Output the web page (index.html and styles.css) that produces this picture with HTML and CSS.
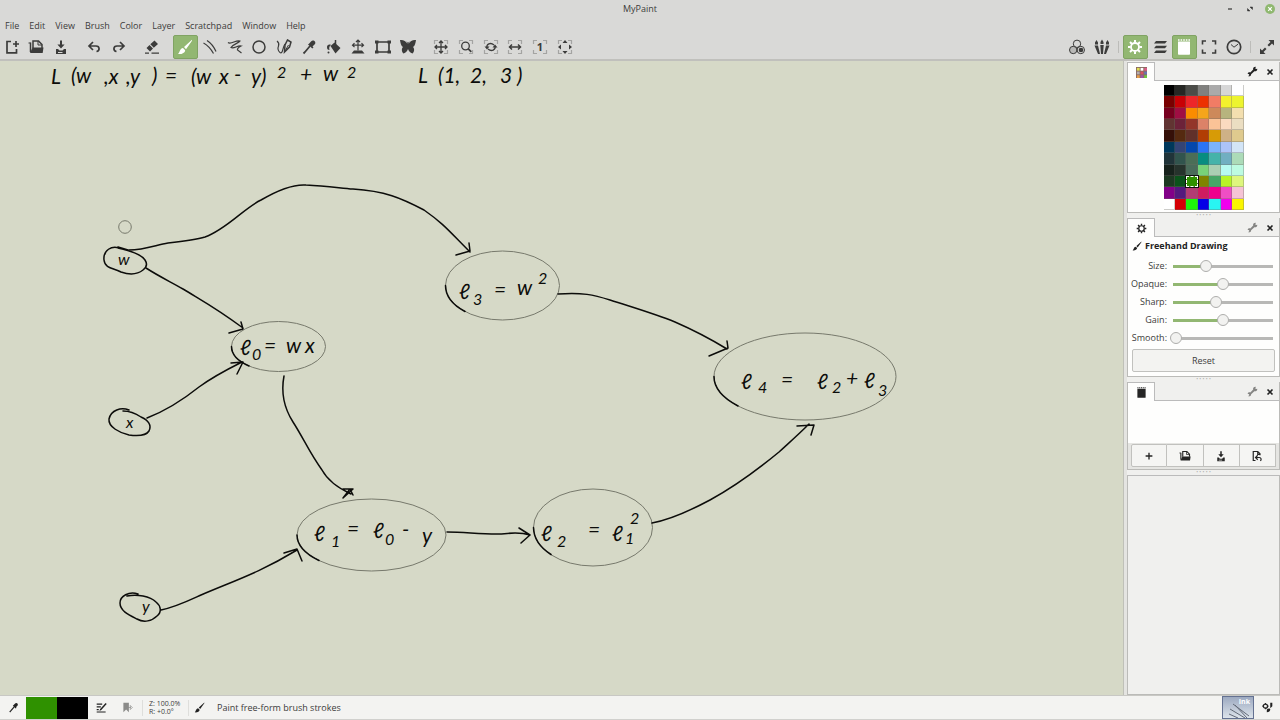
FILE: index.html
```html
<!DOCTYPE html>
<html lang="en">
<head>
<meta charset="utf-8">
<title>MyPaint</title>
<link rel="stylesheet" href="styles.css">
</head>
<body>
<svg class="defs" aria-hidden="true">
  <symbol id="i-new" viewBox="0 0 16 16"><path d="M7 2.500H3v11.300h9.500V10M9 5h6M12 2v6" fill="none" stroke="currentColor" stroke-width="1.700"/></symbol>
  <symbol id="i-open" viewBox="0 0 16 16"><path d="M2.500 13V3.500M5 9V2h5.500L14 5.500V9" fill="none" stroke="currentColor" stroke-width="1.500"/><path d="M10 2v4h4M.5 4h2" fill="none" stroke="currentColor"/><path d="M4.500 8.500h11l-.8 5.500H2z" fill="currentColor"/></symbol>
  <symbol id="i-save" viewBox="0 0 16 16"><path d="M7 1.500h2v4h2.600L8 9.500 4.400 5.500H7zM3 10h2l1.500 1.500h3L11 10h2v5H3z" fill="currentColor"/><path d="M5 13.500h4.500" stroke="#d9d9d7"/></symbol>
  <symbol id="i-undo" viewBox="0 0 16 16"><path d="M7 3 3 7l4 4M3.500 7h6.500c4 0 4 5 .5 5.500" fill="none" stroke="currentColor" stroke-width="1.700"/></symbol>
  <symbol id="i-redo" viewBox="0 0 16 16"><path d="m9 3 4 4-4 4M12.500 7H6c-4 0-4 5-.5 5.500" fill="none" stroke="currentColor" stroke-width="1.700"/></symbol>
  <symbol id="i-eraser" viewBox="0 0 16 16"><path d="m2.500 9 3-3L9 9.500l-3 3zM6.300 5.200 10.500 1.500 14 5 9.800 8.800z" fill="currentColor"/><path d="M1 14.200h4M7.500 14.200H15" stroke="currentColor" stroke-width="1.300"/></symbol>
  <symbol id="i-brush" viewBox="0 0 16 16"><path d="M15 .8 7 8l2 2.200 6-8.400zM6 9 8.200 11.200C8 14 4.500 15.500 1 15c2-1.500 1.500-5.500 5-6" fill="currentColor"/></symbol>
  <symbol id="i-lines" viewBox="0 0 16 16"><path d="M1.500 4C6 6.500 9 10 11.500 14.500M5 1.500c4 2.500 7 6.500 9 11" fill="none" stroke="currentColor" stroke-width="1.200"/></symbol>
  <symbol id="i-zig" viewBox="0 0 16 16"><path d="M1 3.500c3 2.500 8-3 12-1.500-1 2-7 3-9 6.500 3 1.500 6-2 10-1.500-2 1-4 2-3.500 4l4 3" fill="none" stroke="currentColor" stroke-width="1.200"/></symbol>
  <symbol id="i-ellipse" viewBox="0 0 16 16"><circle cx="8" cy="8" r="6" fill="none" stroke="currentColor" stroke-width="1.500"/></symbol>
  <symbol id="i-ink" viewBox="0 0 16 16"><path d="M1 2c4 3 .5 5 1 8s3 5 4 3 1-5 3-8" fill="none" stroke="currentColor" stroke-width="1.200"/><path d="m11.500 1 3.500 2-1.500 5-5 5 .5-7z" fill="none" stroke="currentColor" stroke-width="1.500"/><path d="m8.500 13 4-7" stroke="currentColor"/></symbol>
  <symbol id="i-picker" viewBox="0 0 16 16"><path d="M10 2.500c2-2.500 5.500 0 4 2.500L11.500 7.500l1 1-1.200 1L7 5.500l1.200-1z" fill="currentColor"/><path d="m9 7-5 6-1.500 1.500" fill="none" stroke="currentColor" stroke-width="1.800"/></symbol>
  <symbol id="i-fill" viewBox="0 0 16 16"><path d="m4.500 7 4-3.500L14.500 9l-5 5.500zM1 8c0-2 2-3 4-2-2 1-2 3-1.500 5C1.500 11 1 10 1 8" fill="currentColor"/><path d="M9.500 8V1" stroke="currentColor" stroke-width="1.500"/><circle cx="2.500" cy="13.500" r="1" fill="currentColor"/></symbol>
  <symbol id="i-layer" viewBox="0 0 16 16"><path d="M8 1v10.500M2.500 6.200h11M6 3l2-2 2 2M4.500 4.200l-2 2 2 2M11.500 4.200l2 2-2 2" fill="none" stroke="currentColor" stroke-width="1.200"/><path d="M1.500 14.500h13L12 11.500H4z" fill="currentColor"/></symbol>
  <symbol id="i-frame" viewBox="0 0 16 16"><path d="M2 3h12v10H2z" fill="none" stroke="currentColor" stroke-width="1.700"/><path d="M0 1.500h3.500v3H0zM12.500 1.500H16v3h-3.500zM0 11.500h3.500v3H0zM12.500 11.500H16v3h-3.500z" fill="currentColor"/></symbol>
  <symbol id="i-butterfly" viewBox="0 0 16 16"><path d="M0 1c3-.5 6 1 7.500 4l-1-3 1.500 2 1.500-2-1 3C10 2 13 .5 16 1c-.5 3-1 6-3 7 2 2 1 5.500-.5 6.500C10 14 8.800 12 8 10c-.8 2-2 4-4.500 4.500C2 13.500 1 10 3 8 1 7 .5 4 0 1" fill="currentColor"/></symbol>
  <symbol id="i-corners" viewBox="0 0 16 16"><path d="M1.500 5V1.500H5M11 1.500h3.500V5M14.500 11v3.500H11M5 14.500H1.500V11" fill="none" stroke="#a4a4a2" stroke-width="1.200"/></symbol>
  <symbol id="i-pan" viewBox="0 0 16 16"><path d="M8 2v12M2 8h12M6 4l2-2 2 2M6 12l2 2 2-2M4 6 2 8l2 2M12 6l2 2-2 2" fill="none" stroke="currentColor" stroke-width="1.300"/></symbol>
  <symbol id="i-zoom" viewBox="0 0 16 16"><circle cx="7.500" cy="7" r="3.800" fill="none" stroke="currentColor" stroke-width="1.300"/><path d="m10.300 9.800 3 3" stroke="currentColor" stroke-width="1.700"/></symbol>
  <symbol id="i-rotate" viewBox="0 0 16 16"><path d="M4 9C3 5 7.500 3 11 6M12 7c1 4-3.500 6-7 3" fill="none" stroke="currentColor" stroke-width="1.300"/><path d="M1.500 7.500h5L4 10.500zM9.500 8.500h5L12 5.500z" fill="currentColor"/></symbol>
  <symbol id="i-mirror" viewBox="0 0 16 16"><path d="M2.500 8h11M5 5.500 2.500 8 5 10.500M11 5.500 13.500 8 11 10.500" fill="none" stroke="currentColor" stroke-width="1.500"/></symbol>
  <symbol id="i-fit" viewBox="0 0 16 16"><path d="m8 1 2.500 3h-5zM8 15l-2.500-3h5zM1 8l3-2.500v5zM15 8l-3 2.500v-5z" fill="currentColor"/></symbol>
  <symbol id="i-colors" viewBox="0 0 16 16"><g fill="none" stroke="currentColor"><circle cx="8" cy="4.800" r="3.700"/><circle cx="4.200" cy="11" r="3.700" fill="#b9b9b7"/><circle cx="11.800" cy="11" r="3.700"/></g><circle cx="12" cy="11" r="2.300" fill="currentColor"/></symbol>
  <symbol id="i-brushes" viewBox="0 0 16 16"><path d="M2.500 1 4 3.500v2H1v-2zM8 .5 9.500 3v2h-3V3zM13.500 1 15 3.500v2h-3v-2zM.5 6.500h3.500l2 8.500H4zM6.300 6h3.400L9 15H7zM12 6.500h3.500L12 15h-2z" fill="currentColor"/></symbol>
  <symbol id="i-gear" viewBox="0 0 16 16"><circle cx="8" cy="8" r="4" fill="none" stroke="currentColor" stroke-width="1.800"/><path d="M8 1v2.500M8 12.500V15M1 8h2.500M12.500 8H15M3 3l2 2M11 11l2 2M13 3l-2 2M5 11l-2 2" stroke="currentColor" stroke-width="2"/></symbol>
  <symbol id="i-layers" viewBox="0 0 16 16"><path d="M4 2h11l-2 2.500H2zM4 6.700h11l-2 2.500H2zM4 11.400h11l-2 2.500H2z" fill="currentColor"/></symbol>
  <symbol id="i-pad" viewBox="0 0 16 16"><path d="M2 2.500h12V15q0 .8-.8.800H2.800Q2 15.800 2 15z" fill="currentColor"/><path d="M2 1h12" stroke="currentColor" stroke-width="1.600" stroke-dasharray="1.600 1"/></symbol>
  <symbol id="i-full" viewBox="0 0 16 16"><path d="M1.500 5.500V2H5M11 2h3.500v3.500M14.500 10.500V14H11M5 14H1.500v-3.500" fill="none" stroke="currentColor" stroke-width="1.600"/></symbol>
  <symbol id="i-clock" viewBox="0 0 16 16"><circle cx="8" cy="8" r="6.700" fill="none" stroke="currentColor" stroke-width="1.700"/><path d="m5 5.500 3 2.700 4-3" fill="none" stroke="currentColor"/></symbol>
  <symbol id="i-expand" viewBox="0 0 16 16"><path d="M9.500 1H15v5.500l-2-2-3 3L8.500 6l3-3zM6.500 15H1V9.500l2 2 3-3L7.500 10l-3 3z" fill="currentColor"/></symbol>
  <symbol id="i-wrench" viewBox="0 0 16 16"><path d="M10.500 1.500 13 1l-1 2.500 1.300 1L15 4c0 3-2 4-4.300 3.600L6 12c0 2.500-2 3.500-4.500 2.800L3.500 13l-1-1.500L1 11.700C1 9.500 3 8.800 4.800 9.500L9 5c-.3-1.500 0-2.700 1.500-3.500" fill="currentColor"/></symbol>
  <symbol id="i-x" viewBox="0 0 16 16"><path d="m4 4 8 8M12 4l-8 8" stroke="currentColor" stroke-width="2.600"/></symbol>
  <symbol id="i-plus" viewBox="0 0 16 16"><path d="M8 3.500v9M3.500 8h9" stroke="currentColor" stroke-width="1.800"/></symbol>
  <symbol id="i-revert" viewBox="0 0 16 16"><path d="M6 14H3V2h6l3 3v2M9 2v4h3M9 7l-3 3 3 3M6.500 10H11c3 0 3 3 1.500 4.500" fill="none" stroke="currentColor" stroke-width="1.600"/></symbol>
  <symbol id="i-edit" viewBox="0 0 16 16"><path d="M1 3h8M1 7h6M1 11h3M1 14.500h13" stroke="currentColor" stroke-width="1.700"/><path d="m14 1.500-8 8.500-1 3 2.700-1.200L15.500 3z" fill="currentColor"/></symbol>
  <symbol id="i-bookmark" viewBox="0 0 16 16"><path d="M2 1h8v14l-4-4-4 4z" fill="currentColor"/><path d="M8 8h5M12 5l3 3-3 3z" stroke="currentColor" fill="#f3f3f1"/></symbol>
  <symbol id="i-brushset" viewBox="0 0 16 16"><circle cx="5" cy="6" r="3" fill="none" stroke="currentColor" stroke-width="1.800"/><path d="M5 1.500v2M5 8.500v2M.5 6h2M7.500 6h2" stroke="currentColor" stroke-width="1.500"/><path d="M12 1h3v5l-3 3zM7 11c2-2 5-2 5 0s-2 4-5 4z" fill="currentColor"/></symbol>
</svg>

<header class="titlebar">
  <h1 class="title">MyPaint</h1>
  <div class="window-controls">
    <button aria-label="Minimize"><svg viewBox="0 0 10 10"><path d="M3 5h4" stroke="#333" stroke-width="1.200"/></svg></button>
    <button aria-label="Restore"><svg viewBox="0 0 10 10"><path d="M5 3h2.500v2.500zM2.500 4.500V7H5z" fill="#333" stroke="#333" stroke-width=".5"/></svg></button>
    <button aria-label="Close"><svg viewBox="0 0 10 10"><circle cx="5" cy="5" r="5" fill="#8fb86f"/><path d="m3.200 3.200 3.600 3.600M6.800 3.200 3.200 6.800" stroke="#fff" stroke-width="1.200"/></svg></button>
  </div>
</header>

<nav class="menubar">
  <button>File</button><button>Edit</button><button>View</button><button>Brush</button><button>Color</button><button>Layer</button><button>Scratchpad</button><button>Window</button><button>Help</button>
</nav>

<div class="toolbar" role="toolbar" aria-label="Main tools">
  <div class="group three">
    <button aria-label="New"><svg><use href="#i-new"/></svg></button>
    <button aria-label="Open"><svg><use href="#i-open"/></svg></button>
    <button aria-label="Save"><svg><use href="#i-save"/></svg></button>
  </div>
  <div class="group two">
    <button aria-label="Undo"><svg><use href="#i-undo"/></svg></button>
    <button aria-label="Redo"><svg><use href="#i-redo"/></svg></button>
  </div>
  <div class="group one"><button aria-label="Eraser"><svg><use href="#i-eraser"/></svg></button></div>
  <div class="group ten">
    <button class="active" aria-label="Freehand drawing"><svg><use href="#i-brush"/></svg></button>
    <button aria-label="Lines"><svg><use href="#i-lines"/></svg></button>
    <button aria-label="Connected lines"><svg><use href="#i-zig"/></svg></button>
    <button aria-label="Ellipses"><svg><use href="#i-ellipse"/></svg></button>
    <button aria-label="Inking"><svg><use href="#i-ink"/></svg></button>
    <button aria-label="Pick color"><svg><use href="#i-picker"/></svg></button>
    <button aria-label="Flood fill"><svg><use href="#i-fill"/></svg></button>
    <button aria-label="Move layer"><svg><use href="#i-layer"/></svg></button>
    <button aria-label="Edit frame"><svg><use href="#i-frame"/></svg></button>
    <button aria-label="Symmetry"><svg><use href="#i-butterfly"/></svg></button>
  </div>
  <div class="group six">
    <button aria-label="Pan"><svg><use href="#i-corners"/><use href="#i-pan"/></svg></button>
    <button aria-label="Zoom"><svg><use href="#i-corners"/><use href="#i-zoom"/></svg></button>
    <button aria-label="Rotate"><svg><use href="#i-corners"/><use href="#i-rotate"/></svg></button>
    <button aria-label="Mirror"><svg><use href="#i-corners"/><use href="#i-mirror"/></svg></button>
    <button aria-label="Reset view"><svg viewBox="0 0 16 16"><use href="#i-corners"/><text x="8" y="12" class="one-mark">1</text></svg></button>
    <button aria-label="Fit view"><svg><use href="#i-corners"/><use href="#i-fit"/></svg></button>
  </div>
  <div class="group two end">
    <button aria-label="Colors"><svg><use href="#i-colors"/></svg></button>
    <button aria-label="Brushes"><svg><use href="#i-brushes"/></svg></button>
  </div>
  <span class="sep"></span>
  <div class="group five">
    <button class="active" aria-label="Tool options"><svg><use href="#i-gear"/></svg></button>
    <button aria-label="Layers"><svg><use href="#i-layers"/></svg></button>
    <button class="active" aria-label="Scratchpad"><svg><use href="#i-pad"/></svg></button>
    <button aria-label="Frame"><svg><use href="#i-full"/></svg></button>
    <button aria-label="History"><svg><use href="#i-clock"/></svg></button>
  </div>
  <span class="sep"></span>
  <div class="group one"><button aria-label="Fullscreen"><svg><use href="#i-expand"/></svg></button></div>
</div>

<main class="workspace">
  <section class="canvas" aria-label="Canvas">
    <svg class="drawing" viewBox="0 61 1123 634" preserveAspectRatio="xMinYMin meet">
      <g class="formula">
        <text x="51" y="84">L</text><text x="71" y="83">(w</text><text x="104" y="84">,x</text><text x="126" y="84">,y</text><text x="152" y="83">)</text><text x="165" y="83">=</text><text x="191" y="84">(w</text><text x="219" y="84">x</text><text x="234" y="82">-</text><text x="251" y="84">y)</text><text class="small" x="277" y="78">2</text><text x="300" y="82">+</text><text x="323" y="81">w</text><text class="small" x="347" y="78">2</text>
        <text x="418" y="83">L</text><text x="438" y="83">(1,</text><text x="470" y="83">2,</text><text x="500" y="83">3</text><text x="517" y="83">)</text>
        <text x="118" y="265" class="small">w</text><text x="126" y="428" class="small">x</text><text x="142" y="612" class="small">y</text>
        <text x="240" y="355">ℓ</text><text x="252" y="360" class="small">0</text><text x="264" y="353">=</text><text x="286" y="353">w</text><text x="305" y="353">x</text>
        <text x="459" y="299">ℓ</text><text x="473" y="305" class="small">3</text><text x="494" y="297">=</text><text x="517" y="295">w</text><text x="538" y="284" class="small">2</text>
        <text x="741" y="389">ℓ</text><text x="758" y="393" class="small">4</text><text x="781" y="387">=</text><text x="817" y="389">ℓ</text><text x="832" y="393" class="small">2</text><text x="846" y="386">+</text><text x="864" y="388">ℓ</text><text x="878" y="396" class="small">3</text>
        <text x="314" y="541">ℓ</text><text x="331" y="547" class="small">1</text><text x="347" y="536">=</text><text x="373" y="538">ℓ</text><text x="385" y="545" class="small">0</text><text x="402" y="537">-</text><text x="422" y="543">y</text>
        <text x="541" y="541">ℓ</text><text x="557" y="547" class="small">2</text><text x="588" y="537">=</text><text x="612" y="541">ℓ</text><text x="630" y="524" class="small">2</text><text x="625" y="544" class="small">1</text>
      </g>
      <g class="outline">
        <circle cx="125" cy="227" r="6.300"/>
        <ellipse cx="278.500" cy="346.500" rx="47" ry="25"/>
        <ellipse cx="502.500" cy="285.500" rx="57" ry="34.500"/>
        <ellipse cx="805" cy="376.500" rx="91" ry="43.500"/>
        <ellipse cx="371.500" cy="535" rx="74.500" ry="36"/>
        <ellipse cx="593" cy="527.500" rx="59.500" ry="38.500"/>
      </g>
      <g class="ink">
        <path d="M122 249C111 244 103 251 104 260s10 8 17 12c9 3 17 2 22-2 4-3 4-7 2-10-4-6-15-9-27-12M118 247l10 3"/>
        <path d="M129 410c-8-3-18 0-20 9-1 8 11 14 20 16 8 1 17 1 20-4 3-6-1-11-8-14-6-4-14-6-18-6"/>
        <path d="M138 594c-9-3-18 2-18 9 0 8 9 12 17 16 7 4 15 2 20-3 5-4 4-10-1-14-6-6-19-8-29-6"/>
        <path d="M129 250c16 0 27-5 39-7 18-2 27-3 37-6 22-8 39-29 56-37 17-10 31-16 45-15 21 1 34 3 47 4 32 2 48 9 71 21 20 14 25 21 46 42M456 255l14-4-1-8"/>
        <path d="M146 268c14 9 25 14 37 21 23 14 33 19 60 39M241 322l2 7-14 4"/>
        <path d="M147 418c18-7 32-15 52-31 15-11 29-18 43-25M231 363l12-1-6 12"/>
        <path d="M284 376c-4 21 2 35 9 46 11 17 16 30 29 48 6 11 16 18 29 24M343 489h10l-10 9 7-9 3 6"/>
        <path d="M161 610c15-3 29-10 40-15 35-15 58-22 96-45M284 553l13-4 5 12"/>
        <path d="M447 532c18 0 30 2 50 2 12 0 20-3 33 1M519 528l11 7-9 8"/>
        <path d="M558 294c24-2 36 1 52 6 31 10 45 14 65 22 23 10 34 16 52 27M709 356l19-8-1-7"/>
        <path d="M652 523c22-4 43-15 58-23 22-12 46-29 69-48 12-11 20-18 30-28M797 426l17-1-3 10"/>
        <path class="arc" d="M231.500 346.500A47 25 0 0 0 249 366M445.500 285.500A57 34.500 0 0 0 465 311.500M714 376.500A91 43.500 0 0 0 738 406M297 535A74.500 36 0 0 0 319 560.500M533.500 527.500A59.500 38.500 0 0 0 551 554.500"/>
      </g>
    </svg>
  </section>
  <div class="splitter"></div>
  <aside class="sidebar">
    <section class="panel">
      <div class="tabs"><button class="tab" aria-label="Palette"><svg viewBox="0 0 12 12"><path fill="#8b6b62" d="M0 0h12v12H0z"/><path fill="#e0df52" d="M1 1h3v3H1z"/><path fill="#fff" d="M5 1h3v3H5z"/><path fill="#dc5b88" d="M9 1h3v3H9z"/><path fill="#b4adb0" d="M1 5h3v3H1z"/><path fill="#d84e65" d="M5 5h3v3H5z"/><path fill="#6773b1" d="M9 5h3v3H9z"/><path fill="#e99f49" d="M1 9h3v3H1z"/><path fill="#9d53a8" d="M5 9h3v3H5z"/><path fill="#6cc83e" d="M9 9h3v3H9z"/></svg></button><button class="tool dark" aria-label="Palette settings"><svg><use href="#i-wrench"/></svg></button><button class="tool close" aria-label="Close palette"><svg><use href="#i-x"/></svg></button></div>
      <div class="palette" id="palette"></div>
    </section>
    <div class="grip">• • • • •</div>
    <section class="panel">
      <div class="tabs"><button class="tab" aria-label="Options"><svg><use href="#i-gear"/></svg></button><button class="tool" aria-label="Options settings"><svg><use href="#i-wrench"/></svg></button><button class="tool close" aria-label="Close options"><svg><use href="#i-x"/></svg></button></div>
      <div class="options">
        <h2><svg><use href="#i-brush"/></svg>Freehand Drawing</h2>
        <div class="row"><label for="size">Size:</label><input id="size" type="range" value="32" style="--v:32"></div>
        <div class="row"><label for="opaque">Opaque:</label><input id="opaque" type="range" value="50" style="--v:50"></div>
        <div class="row"><label for="sharp">Sharp:</label><input id="sharp" type="range" value="43" style="--v:43"></div>
        <div class="row"><label for="gain">Gain:</label><input id="gain" type="range" value="50" style="--v:50"></div>
        <div class="row"><label for="smooth">Smooth:</label><input id="smooth" type="range" value="0" style="--v:0"></div>
        <button class="reset">Reset</button>
      </div>
    </section>
    <div class="grip">• • • • •</div>
    <section class="panel">
      <div class="tabs"><button class="tab" aria-label="Scratchpad"><svg><use href="#i-pad"/></svg></button><button class="tool" aria-label="Scratchpad settings"><svg><use href="#i-wrench"/></svg></button><button class="tool close" aria-label="Close scratchpad"><svg><use href="#i-x"/></svg></button></div>
      <div class="pad"></div>
      <div class="pad-actions">
        <button aria-label="New scratchpad"><svg><use href="#i-plus"/></svg></button>
        <button aria-label="Open scratchpad"><svg><use href="#i-open"/></svg></button>
        <button aria-label="Save scratchpad"><svg><use href="#i-save"/></svg></button>
        <button aria-label="Revert scratchpad"><svg><use href="#i-revert"/></svg></button>
      </div>
    </section>
    <div class="grip">• • • • •</div>
    <section class="panel rest"></section>
  </aside>
</main>

<footer class="statusbar">
  <button class="icon" aria-label="Pick color"><svg><use href="#i-picker"/></svg></button>
  <div class="colors"><button class="current" aria-label="Current color"></button><button class="previous" aria-label="Previous color"></button></div>
  <button class="icon" aria-label="Edit color"><svg><use href="#i-edit"/></svg></button>
  <button class="icon faded" aria-label="Bookmark"><svg><use href="#i-bookmark"/></svg></button>
  <div class="zoom">Z: 100.0%<br>R: +0.0°</div>
  <div class="mode"><svg><use href="#i-brush"/></svg><span>Paint free-form brush strokes</span></div>
  <button class="preview" aria-label="Current brush"><svg viewBox="0 0 30 20"><path d="M10 6 26 18M7 11l15 9M6 16l9 4M12 7l12 13" fill="none" stroke="#626977"/></svg><span>Ink</span></button>
  <button class="icon last" aria-label="Brush settings"><svg><use href="#i-brushset"/></svg></button>
</footer>
<script src="app.js"></script>
</body>
</html>
```
FILE: styles.css
```css
* { box-sizing: border-box; }
body {
  margin: 0;
  height: 100vh;
  display: flex;
  flex-direction: column;
  overflow: hidden;
  background: #d9d9d7;
  color: #3c3c3b;
  font: 9px/12px "Open Sans", "Noto Sans", sans-serif;
}
button {
  margin: 0;
  padding: 0;
  border: 0;
  background: none;
  color: inherit;
  font: inherit;
  display: flex;
  align-items: center;
  justify-content: center;
}
.defs { position: absolute; width: 0; height: 0; }
.titlebar {
  height: 18px;
  flex: none;
  display: grid;
  grid-template-columns: 1fr auto 1fr;
  align-items: center;
}
.title { grid-column: 2; margin: 0; font-size: 9px; font-weight: 500; }
.window-controls { display: flex; justify-content: flex-end; gap: 10px; padding-right: 5px; }
.window-controls svg { width: 10px; height: 10px; display: block; }
.menubar { display: flex; flex: none; height: 16px; gap: 10px; padding: 0 5px; align-items: center; }
.toolbar {
  flex: none;
  height: 27px;
  display: flex;
  align-items: center;
  gap: 9px;
  border-bottom: 2px solid #c0c0bc;
}
.group { display: flex; flex: none; }
.group button { flex: 1; height: 24px; border: 1px solid transparent; border-radius: 2px; }
.group svg { width: 16px; height: 16px; }
.group .active { background: #92b772; border-color: #80a363; color: #fff; }
.one { width: 24px; }
.two { width: 49px; }
.three { width: 73px; }
.five { width: 123px; }
.six { width: 148px; }
.ten { width: 247px; }
.end { margin-left: auto; }
.toolbar .end, .toolbar .end ~ * { margin-right: -5px; }
.toolbar > .group:last-child { margin-right: 1px; }
.sep { width: 1px; height: 12px; background: #bcbcb9; }
.one-mark { font: bold 11px "Noto Sans", sans-serif; text-anchor: middle; fill: currentColor; }

.workspace { flex: 1; min-height: 0; display: flex; }
.canvas { flex: 1; min-width: 0; background: #d6d9c7; overflow: hidden; }
.drawing { display: block; width: 100%; height: 100%; }
.formula { font: italic 21px Lato, "DejaVu Sans", sans-serif; fill: #0c0c0a; }
.small { font-size: 16px; }
.outline { fill: none; stroke: #77796c; stroke-width: 1; }
.ink { fill: none; stroke: #0c0c0a; stroke-width: 1.5; stroke-linecap: round; stroke-linejoin: round; }
.splitter { width: 4px; flex: none; background: #e4e4e1; border-left: 1px solid #bfc0b8; }
.sidebar {
  width: 153px;
  flex: none;
  display: flex;
  flex-direction: column;
  background: #f0f0ee;
  padding-top: 1px;
}
.panel { border: 1px solid #bbbbb8; border-top: 0; background: #fefefd; flex: none; }
.tabs {
  height: 19px;
  display: flex;
  align-items: stretch;
  justify-content: flex-end;
  background: linear-gradient(#bbb, #bbb) bottom / 100% 1px no-repeat #f0f0ee;
}
.tab { width: 27px; margin-right: auto; background: #fefefd; border: 1px solid #bbb; border-width: 1px 1px 0 0; color: #252525; }
.tab svg { width: 11px; height: 11px; }
.tool { width: 18px; color: #858583; }
.tool svg { width: 11px; height: 11px; }
.tool.dark, .tool.close { color: #222; }
.tool.close svg { width: 10px; height: 10px; }
.palette {
  width: 80px;
  height: 125px;
  margin: 4px auto 2px;
  display: grid;
  grid-template: repeat(11, 1fr) / repeat(7, 1fr);
}
.swatch { border: 1px solid rgba(110, 110, 100, .35); border-width: 0 1px 1px 0; }
.swatch.selected { outline: 1px dashed #fff; outline-offset: -1px; box-shadow: 0 0 0 1px #111; z-index: 1; }
.grip { height: 5px; flex: none; font-size: 5px; line-height: 5px; text-align: center; color: #b0b0ae; }
.options { padding: 2px 4px 4px; }
.options h2 { display: flex; align-items: center; gap: 3px; margin: 0; height: 14px; font-size: 9px; font-weight: 700; color: #222; }
.options h2 svg { width: 10px; height: 10px; }
.row { display: flex; align-items: center; justify-content: flex-end; height: 18px; gap: 3px; }
.row:first-of-type { margin-top: 4px; }
.row input {
  appearance: none;
  width: 106px;
  height: 12px;
  margin: 0 -1px 0 0;
  flex: none;
  background:
    linear-gradient(#92b772, #92b772) 3px 5px / calc(var(--v) * 1%) 3px no-repeat,
    linear-gradient(#b8b8b6, #b8b8b6) center / 100px 3px no-repeat;
}
.row input::-webkit-slider-thumb { appearance: none; width: 12px; height: 12px; border: 1px solid #aeaeac; border-radius: 50%; background: #f2f2f0; }
.reset { width: 100%; height: 23px; margin-top: 2px; border: 1px solid #c1c1be; border-radius: 2px; background: #f3f3f1; }
.pad { height: 42px; }
.pad-actions { display: grid; grid-template-columns: repeat(4, 1fr); padding: 1px 3px 2px; background: #e5e5e2; }
.pad-actions button { height: 23px; background: #f5f5f3; border: 1px solid #c1c1be; border-left-width: 0; color: #252525; }
.pad-actions button:first-child { border-left-width: 1px; border-radius: 2px 0 0 2px; }
.pad-actions svg { width: 12px; height: 12px; }
.rest { flex: 1; background: #f0f0ee; border-top: 1px solid #bbb; }

.statusbar { height: 25px; flex: none; display: flex; align-items: center; background: #f3f3f1; border-top: 1px solid #c8c8c4; border-bottom: 1px solid #d0d0cd; }
.icon { width: 26px; color: #222; }
.icon svg { width: 11px; height: 11px; }
.faded { color: #8b8b89; }
.colors { display: flex; width: 62px; height: 22px; }
.colors button { flex: 1; }
.current { background: #2f9100; }
.previous { background: #000; }
.zoom { width: 47px; margin-left: 2px; padding-left: 6px; font-size: 7px; line-height: 8px; border: 1px solid #dededb; border-width: 0 1px; }
.mode { display: flex; align-items: center; gap: 12px; padding-left: 5px; }
.mode svg { width: 11px; height: 11px; color: #222; }
.preview { position: relative; margin-left: auto; width: 32px; height: 23px; border: 1px solid #647191; background: linear-gradient(#9daac1, #dce3ea); }
.preview svg { width: 30px; height: 20px; }
.preview span { position: absolute; top: 0; right: 3px; font-size: 7px; line-height: 9px; font-weight: 700; color: #fff; }
```
FILE: app.js
```js
const rows = [
  "000000 262724 4b4c48 80807e aaaaaa d7d7d7 ffffff",
  "790000 c80005 ed2629 ed3000 f17c65 f4f12c edf42f",
  "77001f a00e43 fa8c00 f5a51b cd895a b7b47e f3dfaf",
  "613432 6c2239 93352a dc8268 fbc397 fadac0 ebdec2",
  "351008 552a10 61302a b13d04 d79b06 ceb187 dfca8e",
  "00385b 344475 0447ad 2c74f4 7bb3fb acc3f8 d3e5f7",
  "203439 31544d 4b6e57 078d80 45b3aa 71afc1 acdbb8",
  "17221c 26332c 4a6b5a 78d279 aacfb3 b7faf0 bdfbe1",
  "1d3922 0b521b 2f9100 7f8500 46a667 b8f527 def67d",
  "820088 55187e b23c73 ce1c60 ee008d ef4ec4 f5c3d5",
  "ffffff d50005 1df50b 0500e7 29f5f2 f000ed faf500"
];
const palette = document.getElementById("palette");
rows.join(" ").split(" ").forEach((hex, index) => {
  const swatch = document.createElement("button");
  swatch.className = index === 58 ? "swatch selected" : "swatch";
  swatch.setAttribute("aria-label", "#" + hex);
  swatch.style.background = "#" + hex;
  palette.append(swatch);
});
```
